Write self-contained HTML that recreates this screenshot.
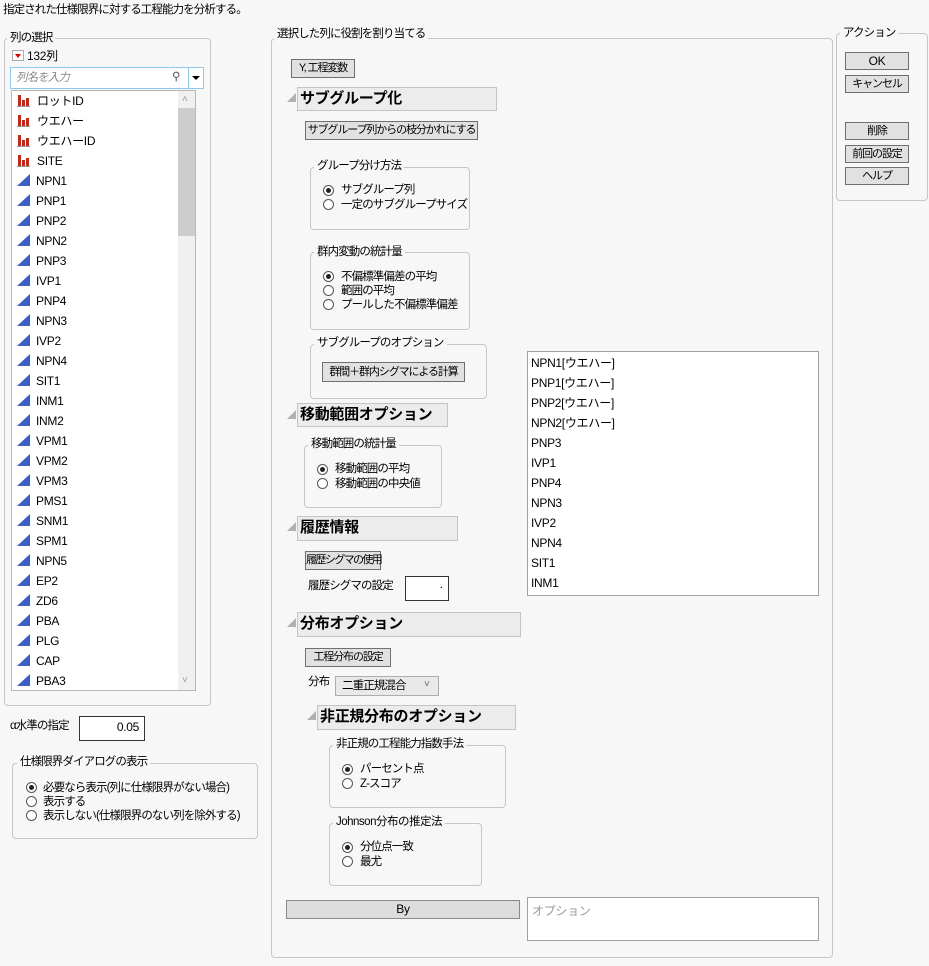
<!DOCTYPE html>
<html><head><meta charset="utf-8"><style>
*{box-sizing:border-box;margin:0;padding:0}
body{width:929px;height:966px;background:#f7f7f7;font-family:"Liberation Sans","Noto Sans CJK JP",sans-serif;font-size:11.5px;letter-spacing:-0.9px;color:#000;position:relative;overflow:hidden}
.a{position:absolute;white-space:nowrap;line-height:14px}
.g{position:absolute;border:1px solid #c6c6c6;border-radius:4px}
.gl{position:absolute;background:#f7f7f7;padding:0 3px;line-height:14px;white-space:nowrap}
.b{position:absolute;border:1px solid #707070;background:#e1e1e1;text-align:center;line-height:16px;white-space:nowrap;font-size:11px;letter-spacing:-1.1px}
.h{position:absolute;border:1px solid #c4c4c4;background:#ececec;font-weight:bold;font-size:15px;letter-spacing:-0.3px;line-height:21px;padding-left:2px;white-space:nowrap}
.t{position:absolute;width:0;height:0;border-left:9px solid transparent;border-bottom:9px solid #b0b0b0}
.r{position:absolute;width:11px;height:11px;border:1px solid #555;border-radius:50%;background:#fff}
.r.on::after{content:"";position:absolute;left:2px;top:2px;width:5px;height:5px;border-radius:50%;background:#222}
.box{position:absolute;border:1px solid #a0a0a0;background:#fff}
.li{position:absolute;left:5px;line-height:14px;white-space:nowrap;font-size:12px;letter-spacing:-0.3px}
.bar{display:inline-block;position:relative;width:13px;height:12px;vertical-align:-2px;margin-right:7px;border-bottom:1px solid #999}
.bar i{position:absolute;bottom:0;background:#c0281c;width:3px}
.tri{display:inline-block;width:0;height:0;border-left:13px solid transparent;border-bottom:12px solid #3b5fc4;vertical-align:-1px;margin-right:6px}
</style></head><body>
<div class="a" style="left:3px;top:3px">指定された仕様限界に対する工程能力を分析する。</div>

<div class="g" style="left:4px;top:38px;width:207px;height:668px"></div>
<div class="gl" style="left:7px;top:31px">列の選択</div>
<div class="a" style="left:12px;top:50px;width:12px;height:11px;border:1px solid #aaa;background:#fff"><div style="position:absolute;left:2px;top:3px;border-left:3px solid transparent;border-right:3px solid transparent;border-top:4px solid #d00"></div></div>
<div class="a" style="left:27px;top:49px;font-size:12px;letter-spacing:-0.3px">132列</div>
<div class="box" style="left:10px;top:67px;width:194px;height:22px;border-color:#8ec9ec"></div>
<div class="a" style="left:16px;top:71px;color:#888;font-style:italic">列名を入力</div>
<div class="a" style="left:172px;top:70px;color:#555">&#x26B2;</div>
<div class="a" style="left:188px;top:68px;width:1px;height:20px;background:#8ec9ec"></div>
<div class="a" style="left:192px;top:76px;border-left:4px solid transparent;border-right:4px solid transparent;border-top:4px solid #000"></div>
<div class="box" style="left:11px;top:90px;width:185px;height:601px;border-color:#b8b8b8">
<div style="position:absolute;left:166px;top:0;width:17px;height:599px;background:#f0f0f0"></div>
<div style="position:absolute;left:166px;top:17px;width:17px;height:128px;background:#cdcdcd"></div>
<div style="position:absolute;left:170px;top:3px;color:#999;font-size:10px">&#x2C4;</div>
<div style="position:absolute;left:170px;top:584px;color:#999;font-size:10px">&#x2C5;</div>
<div class="li" style="top:3px"><span class="bar"><i style="left:1px;height:11px"></i><i style="left:5px;height:6px"></i><i style="left:9px;height:8px"></i></span>ロットID</div>
<div class="li" style="top:23px"><span class="bar"><i style="left:1px;height:11px"></i><i style="left:5px;height:6px"></i><i style="left:9px;height:8px"></i></span>ウエハー</div>
<div class="li" style="top:43px"><span class="bar"><i style="left:1px;height:11px"></i><i style="left:5px;height:6px"></i><i style="left:9px;height:8px"></i></span>ウエハーID</div>
<div class="li" style="top:63px"><span class="bar"><i style="left:1px;height:11px"></i><i style="left:5px;height:6px"></i><i style="left:9px;height:8px"></i></span>SITE</div>
<div class="li" style="top:83px"><span class="tri"></span>NPN1</div>
<div class="li" style="top:103px"><span class="tri"></span>PNP1</div>
<div class="li" style="top:123px"><span class="tri"></span>PNP2</div>
<div class="li" style="top:143px"><span class="tri"></span>NPN2</div>
<div class="li" style="top:163px"><span class="tri"></span>PNP3</div>
<div class="li" style="top:183px"><span class="tri"></span>IVP1</div>
<div class="li" style="top:203px"><span class="tri"></span>PNP4</div>
<div class="li" style="top:223px"><span class="tri"></span>NPN3</div>
<div class="li" style="top:243px"><span class="tri"></span>IVP2</div>
<div class="li" style="top:263px"><span class="tri"></span>NPN4</div>
<div class="li" style="top:283px"><span class="tri"></span>SIT1</div>
<div class="li" style="top:303px"><span class="tri"></span>INM1</div>
<div class="li" style="top:323px"><span class="tri"></span>INM2</div>
<div class="li" style="top:343px"><span class="tri"></span>VPM1</div>
<div class="li" style="top:363px"><span class="tri"></span>VPM2</div>
<div class="li" style="top:383px"><span class="tri"></span>VPM3</div>
<div class="li" style="top:403px"><span class="tri"></span>PMS1</div>
<div class="li" style="top:423px"><span class="tri"></span>SNM1</div>
<div class="li" style="top:443px"><span class="tri"></span>SPM1</div>
<div class="li" style="top:463px"><span class="tri"></span>NPN5</div>
<div class="li" style="top:483px"><span class="tri"></span>EP2</div>
<div class="li" style="top:503px"><span class="tri"></span>ZD6</div>
<div class="li" style="top:523px"><span class="tri"></span>PBA</div>
<div class="li" style="top:543px"><span class="tri"></span>PLG</div>
<div class="li" style="top:563px"><span class="tri"></span>CAP</div>
<div class="li" style="top:583px"><span class="tri"></span>PBA3</div>
</div>

<div class="a" style="left:10px;top:719px">α水準の指定</div>
<div class="box" style="left:79px;top:716px;width:66px;height:25px;border-color:#333"><div style="position:absolute;right:5px;top:3px;font-size:12px;letter-spacing:-0.3px">0.05</div></div>

<div class="g" style="left:12px;top:763px;width:246px;height:76px"></div>
<div class="gl" style="left:17px;top:755px">仕様限界ダイアログの表示</div>
<div class="r on" style="left:26px;top:782px"></div><div class="a" style="left:43px;top:781px">必要なら表示(列に仕様限界がない場合)</div>
<div class="r" style="left:26px;top:796px"></div><div class="a" style="left:43px;top:795px">表示する</div>
<div class="r" style="left:26px;top:810px"></div><div class="a" style="left:43px;top:809px">表示しない(仕様限界のない列を除外する)</div>

<div class="g" style="left:271px;top:38px;width:562px;height:920px"></div>
<div class="gl" style="left:274px;top:27px">選択した列に役割を割り当てる</div>
<div class="b" style="left:291px;top:59px;width:64px;height:19px">Y, 工程変数</div>

<div class="t" style="left:287px;top:93px"></div>
<div class="h" style="left:297px;top:87px;width:200px;height:24px">サブグループ化</div>
<div class="b" style="left:305px;top:121px;width:173px;height:19px">サブグループ列からの枝分かれにする</div>

<div class="g" style="left:310px;top:167px;width:160px;height:63px"></div>
<div class="gl" style="left:314px;top:159px">グループ分け方法</div>
<div class="r on" style="left:323px;top:185px"></div><div class="a" style="left:341px;top:183px">サブグループ列</div>
<div class="r" style="left:323px;top:199px"></div><div class="a" style="left:341px;top:198px">一定のサブグループサイズ</div>

<div class="g" style="left:310px;top:252px;width:160px;height:78px"></div>
<div class="gl" style="left:314px;top:245px">群内変動の統計量</div>
<div class="r on" style="left:323px;top:271px"></div><div class="a" style="left:341px;top:270px">不偏標準偏差の平均</div>
<div class="r" style="left:323px;top:285px"></div><div class="a" style="left:341px;top:284px">範囲の平均</div>
<div class="r" style="left:323px;top:299px"></div><div class="a" style="left:341px;top:298px">プールした不偏標準偏差</div>

<div class="g" style="left:310px;top:344px;width:177px;height:55px"></div>
<div class="gl" style="left:314px;top:336px">サブグループのオプション</div>
<div class="b" style="left:322px;top:362px;width:143px;height:20px;line-height:18px">群間＋群内シグマによる計算</div>

<div class="t" style="left:287px;top:410px"></div>
<div class="h" style="left:297px;top:403px;width:151px;height:24px">移動範囲オプション</div>
<div class="g" style="left:304px;top:445px;width:138px;height:63px"></div>
<div class="gl" style="left:308px;top:437px">移動範囲の統計量</div>
<div class="r on" style="left:317px;top:464px"></div><div class="a" style="left:335px;top:462px">移動範囲の平均</div>
<div class="r" style="left:317px;top:478px"></div><div class="a" style="left:335px;top:477px">移動範囲の中央値</div>

<div class="t" style="left:287px;top:522px"></div>
<div class="h" style="left:297px;top:516px;width:161px;height:25px">履歴情報</div>
<div class="b" style="left:305px;top:551px;width:76px;height:19px;letter-spacing:-1.6px">履歴シグマの使用</div>
<div class="a" style="left:308px;top:579px">履歴シグマの設定</div>
<div class="box" style="left:405px;top:576px;width:44px;height:25px;border-color:#333"><div style="position:absolute;right:6px;top:2px">.</div></div>

<div class="t" style="left:287px;top:618px"></div>
<div class="h" style="left:297px;top:612px;width:224px;height:25px">分布オプション</div>
<div class="b" style="left:305px;top:648px;width:86px;height:19px">工程分布の設定</div>
<div class="a" style="left:308px;top:675px">分布</div>
<div class="a" style="left:335px;top:676px;width:104px;height:20px;border:1px solid #adadad;background:#e9e9e9;padding:2px 0 0 6px">二重正規混合 <span style="position:absolute;left:88px;top:1px;color:#666;font-size:10px">&#x2C5;</span></div>

<div class="t" style="left:307px;top:711px"></div>
<div class="h" style="left:317px;top:705px;width:199px;height:25px">非正規分布のオプション</div>
<div class="g" style="left:329px;top:745px;width:177px;height:63px"></div>
<div class="gl" style="left:333px;top:737px">非正規の工程能力指数手法</div>
<div class="r on" style="left:342px;top:764px"></div><div class="a" style="left:360px;top:762px">パーセント点</div>
<div class="r" style="left:342px;top:778px"></div><div class="a" style="left:360px;top:777px">Z-スコア</div>

<div class="g" style="left:329px;top:823px;width:153px;height:63px"></div>
<div class="gl" style="left:333px;top:815px;letter-spacing:-0.5px">Johnson分布の推定法</div>
<div class="r on" style="left:342px;top:842px"></div><div class="a" style="left:360px;top:840px">分位点一致</div>
<div class="r" style="left:342px;top:856px"></div><div class="a" style="left:360px;top:855px">最尤</div>

<div class="b" style="left:286px;top:900px;width:234px;height:19px;border-color:#8a8a8a;background:#dcdcdc;font-size:12px;letter-spacing:-0.3px">By</div>
<div class="box" style="left:527px;top:897px;width:292px;height:44px"><div style="position:absolute;left:4px;top:4px;color:#999;font-size:12px;letter-spacing:-0.3px">オプション</div></div>

<div class="box" style="left:527px;top:351px;width:292px;height:245px">
<div class="li" style="top:4px;left:3px">NPN1[ウエハー]</div>
<div class="li" style="top:24px;left:3px">PNP1[ウエハー]</div>
<div class="li" style="top:44px;left:3px">PNP2[ウエハー]</div>
<div class="li" style="top:64px;left:3px">NPN2[ウエハー]</div>
<div class="li" style="top:84px;left:3px">PNP3</div>
<div class="li" style="top:104px;left:3px">IVP1</div>
<div class="li" style="top:124px;left:3px">PNP4</div>
<div class="li" style="top:144px;left:3px">NPN3</div>
<div class="li" style="top:164px;left:3px">IVP2</div>
<div class="li" style="top:184px;left:3px">NPN4</div>
<div class="li" style="top:204px;left:3px">SIT1</div>
<div class="li" style="top:224px;left:3px">INM1</div>
</div>

<div class="g" style="left:836px;top:33px;width:92px;height:168px"></div>
<div class="gl" style="left:840px;top:26px">アクション</div>
<div class="b" style="left:845px;top:52px;width:64px;height:18px;font-size:12px;letter-spacing:-0.3px">OK</div>
<div class="b" style="left:845px;top:75px;width:64px;height:18px">キャンセル</div>
<div class="b" style="left:845px;top:122px;width:64px;height:18px">削除</div>
<div class="b" style="left:845px;top:145px;width:64px;height:18px">前回の設定</div>
<div class="b" style="left:845px;top:167px;width:64px;height:18px">ヘルプ</div>
</body></html>
